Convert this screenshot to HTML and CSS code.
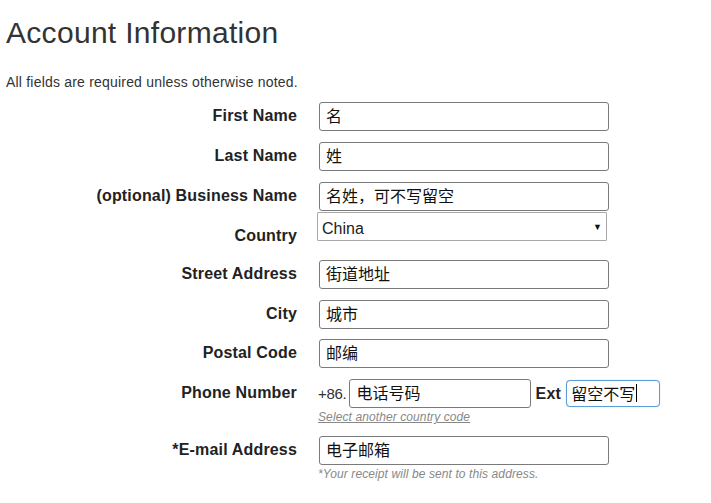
FILE: index.html
```html
<!DOCTYPE html>
<html lang="en">
<head>
<meta charset="utf-8">
<title>Account Information</title>
<link rel="stylesheet" href="styles.css">
</head>
<body>
<h1 class="title">Account Information</h1>
<p class="note">All fields are required unless otherwise noted.</p>
<form class="form">
  <div class="row">
    <label class="label">First Name</label>
    <div class="field"><input class="text" type="text" value="名"></div>
  </div>
  <div class="row">
    <label class="label">Last Name</label>
    <div class="field"><input class="text" type="text" value="姓"></div>
  </div>
  <div class="row row-tight">
    <label class="label">(optional) Business Name</label>
    <div class="field"><input class="text" type="text" value="名姓，可不写留空"></div>
  </div>
  <div class="row row-country">
    <label class="label label-low">Country</label>
    <div class="field">
      <div class="select-wrap">
        <select class="select"><option>China</option></select>
        <span class="arrow">▼</span>
      </div>
    </div>
  </div>
  <div class="row">
    <label class="label">Street Address</label>
    <div class="field"><input class="text" type="text" value="街道地址"></div>
  </div>
  <div class="row row-city">
    <label class="label">City</label>
    <div class="field"><input class="text" type="text" value="城市"></div>
  </div>
  <div class="row">
    <label class="label">Postal Code</label>
    <div class="field"><input class="text" type="text" value="邮编"></div>
  </div>
  <div class="row">
    <label class="label">Phone Number</label>
    <div class="field">
      <div class="phone">
        <span class="prefix">+86.</span>
        <input class="text text-phone" type="text" value="电话号码">
        <span class="ext-label">Ext</span>
        <div class="text text-ext"><span>留空不写</span><span class="caret"></span></div>
      </div>
      <a class="hint hint-link" href="#">Select another country code</a>
    </div>
  </div>
  <div class="row">
    <label class="label">*E-mail Address</label>
    <div class="field">
      <input class="text" type="text" value="电子邮箱">
      <div class="hint">*Your receipt will be sent to this address.</div>
    </div>
  </div>
</form>
</body>
</html>
```

FILE: styles.css
```css
html, body {
  margin: 0;
  padding: 0;
  background: #fff;
}
body {
  font-family: "Liberation Sans", Arial, "Noto Sans CJK SC", sans-serif;
  color: #222;
  width: 711px;
  height: 503px;
  overflow: hidden;
}
.title {
  margin: 16px 0 0 6px;
  font-size: 30px;
  line-height: 33px;
  letter-spacing: 0.3px;
  font-weight: normal;
  color: #333;
}
.note {
  margin: 23px 0 0 6px;
  font-size: 14px;
  line-height: 20px;
  letter-spacing: 0.2px;
  color: #333;
}
.form {
  margin-top: 10px;
}
.row {
  display: flex;
  align-items: flex-start;
  margin-bottom: 11px;
}
.row-tight {
  margin-bottom: 1px;
}
.row-country {
  margin-bottom: 11px;
}
.row-city {
  margin-bottom: 10px;
}
.label {
  width: 297px;
  flex: none;
  text-align: right;
  font-weight: bold;
  font-size: 16px;
  line-height: 27px;
  letter-spacing: 0.17px;
  color: #222;
}
.label-low {
  padding-top: 10px;
}
.field {
  margin-left: 21px;
  display: flex;
  flex-direction: column;
  align-items: flex-start;
}
.text {
  box-sizing: border-box;
  margin: 0 0 0 1px;
  width: 290px;
  height: 29px;
  border: 1px solid #7a7a7a;
  border-radius: 3px;
  padding: 0 6px 3px;
  font-family: "Liberation Sans", Arial, "Noto Sans CJK SC", sans-serif;
  font-size: 16px;
  color: #111;
  background: #fff;
  outline: none;
}
.select-wrap {
  position: relative;
  margin-left: -1px;
  width: 290px;
  height: 29px;
}
.select {
  appearance: none;
  -webkit-appearance: none;
  box-sizing: border-box;
  width: 290px;
  height: 29px;
  margin: 0;
  border: 1px solid #a9a9a9;
  border-radius: 1px;
  background: #fff;
  padding: 3px 0 0 4px;
  font-family: "Liberation Sans", Arial, sans-serif;
  font-size: 16px;
  color: #222;
}
.arrow {
  position: absolute;
  right: 5px;
  top: 10px;
  font-size: 9px;
  line-height: 10px;
  color: #111;
  pointer-events: none;
}
.phone {
  display: flex;
  align-items: center;
  height: 29px;
}
.prefix {
  font-size: 15px;
  color: #333;
  margin-right: 3px;
  letter-spacing: -0.3px;
}
.text-phone {
  width: 182px;
  margin-left: 0;
}
.ext-label {
  font-weight: bold;
  font-size: 16px;
  letter-spacing: 0.3px;
  color: #222;
  margin: 0 5px 0 4px;
}
.text-ext {
  width: 94px;
  height: 27px;
  margin-left: 0;
  padding: 0 4px 2px;
  border-color: #5b9dd9;
  border-radius: 4px;
  display: flex;
  align-items: center;
  box-shadow: 0 0 1px #8ab8e6;
}
.caret {
  display: inline-block;
  width: 1px;
  height: 18px;
  background: #000;
  margin-left: 1px;
}
.hint {
  margin-top: 2px;
  font-size: 12px;
  line-height: 15px;
  font-style: italic;
  letter-spacing: 0.1px;
  color: #888;
}
.hint-link {
  text-decoration: underline;
  color: #888;
}
```
